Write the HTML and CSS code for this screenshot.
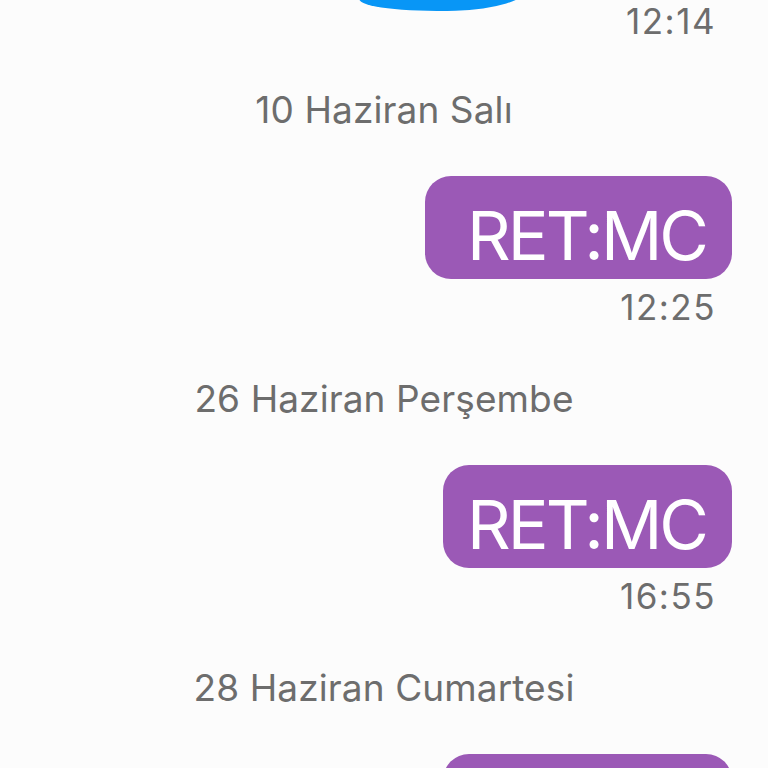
FILE: index.html
```html
<!DOCTYPE html>
<html lang="tr">
<head>
<meta charset="utf-8">
<title>Mesajlar</title>
<link rel="stylesheet" href="styles.css">
</head>
<body>
<div class="chat">
  <div class="scribble"></div>
  <div class="time time-first">12:14</div>

  <section class="day">
    <div class="date">10 Haziran Salı</div>
    <div class="row"><div class="bubble bubble-wide">RET:MC</div></div>
    <div class="time">12:25</div>
  </section>

  <section class="day">
    <div class="date">26 Haziran Perşembe</div>
    <div class="row"><div class="bubble">RET:MC</div></div>
    <div class="time">16:55</div>
  </section>

  <section class="day">
    <div class="date">28 Haziran Cumartesi</div>
    <div class="row"><div class="bubble">RET:MC</div></div>
  </section>
</div>
</body>
</html>
```

FILE: styles.css
```css
html, body {
  margin: 0;
  padding: 0;
  background: #fcfcfc;
}
body {
  font-family: Inter, "Noto Sans", sans-serif;
  color: #6d6d6d;
  overflow: hidden;
  height: 768px;
}
.chat {
  position: relative;
  display: flex;
  flex-direction: column;
}
.scribble {
  position: absolute;
  left: 359px;
  top: -30px;
  width: 168px;
  height: 41px;
  background: #0896f6;
  border-radius: 0 0 60% 80% / 0 0 28px 20px;
  transform: rotate(-1.5deg);
}
.time {
  font-size: 35px;
  line-height: 40px;
  letter-spacing: 1.5px;
  text-align: right;
  padding-right: 52px;
  margin-top: 8px;
}
.time-first {
  margin-top: 1px;
}
.day {
  display: flex;
  flex-direction: column;
  margin-top: 47px;
}
.day + .day {
  margin-top: 50px;
}
.date {
  font-size: 37px;
  line-height: 44px;
  text-align: center;
  letter-spacing: 0.1px;
}
.row {
  display: flex;
  justify-content: flex-end;
  padding-right: 36px;
  margin-top: 44px;
}
.bubble {
  background: #9b59b6;
  color: #ffffff;
  font-size: 68px;
  line-height: 68px;
  padding: 25px 26px 10px 24px;
  border-radius: 26px;
  letter-spacing: -3px;
}
.bubble-wide {
  padding-left: 42px;
}
```
